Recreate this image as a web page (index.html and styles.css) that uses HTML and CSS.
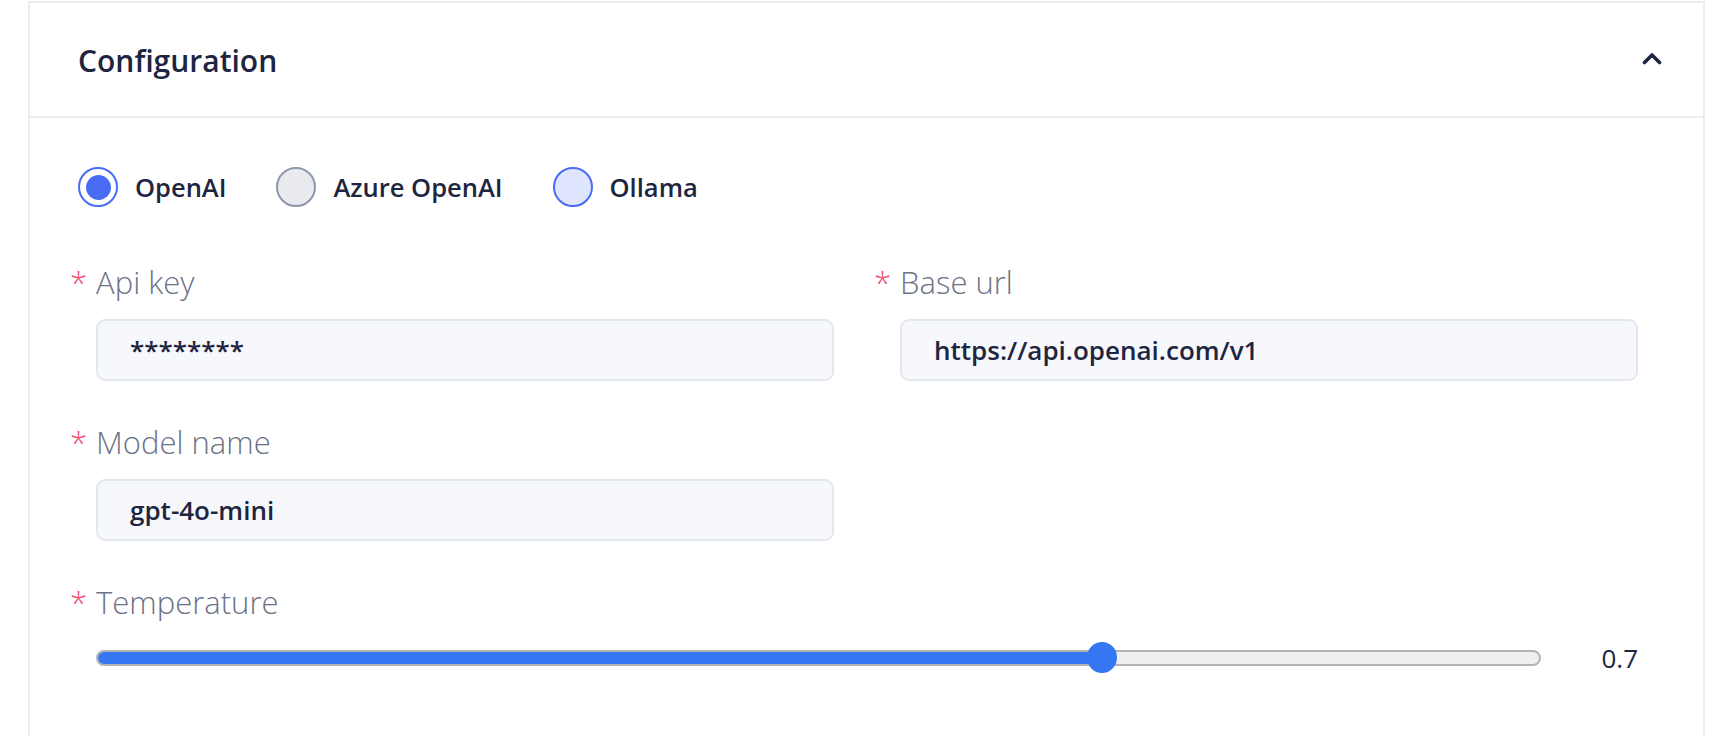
FILE: index.html
```html
<!DOCTYPE html>
<html lang="en">
<head>
<meta charset="utf-8">
<title>Configuration</title>
<link rel="stylesheet" href="styles.css">
</head>
<body>
<section class="card">
  <header class="card-header">
    <h2 class="card-title">Configuration</h2>
    <svg class="chevron" width="20" height="13" viewBox="0 0 20 13" aria-hidden="true">
      <path d="M2.5 10.5 L10 3 L17.5 10.5" fill="none" stroke="#1e2541" stroke-width="3.6" stroke-linecap="round" stroke-linejoin="round"/>
    </svg>
  </header>
  <div class="card-body">
    <div class="radio-row">
      <label class="radio">
        <span class="radio-circle radio-checked"><span class="radio-dot"></span></span>
        <span class="radio-label">OpenAI</span>
      </label>
      <label class="radio">
        <span class="radio-circle radio-gray"></span>
        <span class="radio-label">Azure OpenAI</span>
      </label>
      <label class="radio">
        <span class="radio-circle radio-light"></span>
        <span class="radio-label">Ollama</span>
      </label>
    </div>
    <div class="form-grid">
      <div class="field">
        <div class="field-label"><span class="req">*</span>Api key</div>
        <div class="input">********</div>
      </div>
      <div class="field">
        <div class="field-label"><span class="req">*</span>Base url</div>
        <div class="input">https://api.openai.com/v1</div>
      </div>
      <div class="field">
        <div class="field-label"><span class="req">*</span>Model name</div>
        <div class="input">gpt-4o-mini</div>
      </div>
      <div class="field"></div>
      <div class="field field-wide">
        <div class="field-label"><span class="req">*</span>Temperature</div>
        <div class="slider-row">
          <div class="slider">
            <div class="slider-track">
              <div class="slider-fill" style="width: 1006px"></div>
            </div>
            <div class="slider-thumb" style="left: 991px"></div>
          </div>
          <div class="slider-value">0.7</div>
        </div>
      </div>
    </div>
  </div>
</section>
</body>
</html>
```

FILE: styles.css
```css
* {
  box-sizing: border-box;
}

html, body {
  margin: 0;
  padding: 0;
  background: #ffffff;
}

body {
  font-family: "Open Sans", "Noto Sans", sans-serif;
  color: #1e2541;
  width: 1732px;
  height: 736px;
  overflow: hidden;
}

.card {
  margin: 1px 0 0 28px;
  width: 1677px;
  height: 800px;
  border: 2px solid #e8ecf3;
  border-bottom: none;
}

.card-header {
  height: 115px;
  display: flex;
  align-items: center;
  justify-content: space-between;
  padding: 2px 41px 0 48px;
  border-bottom: 2px solid #e8ecf3;
}

.card-title {
  margin: 0;
  font-size: 30px;
  font-weight: 600;
  color: #1e2541;
}

.chevron {
  display: block;
  margin-top: -4px;
}

.card-body {
  padding: 49px 0 0 0;
}

.radio-row {
  display: flex;
  align-items: center;
  gap: 50px;
  margin-left: 48px;
  height: 40px;
}

.radio {
  display: flex;
  align-items: center;
  gap: 17px;
}

.radio-circle {
  width: 40px;
  height: 40px;
  border-radius: 50%;
  border: 2px solid #4a6cf5;
  display: flex;
  align-items: center;
  justify-content: center;
  background: #ffffff;
}

.radio-dot {
  width: 25px;
  height: 25px;
  border-radius: 50%;
  background: #4a6cf5;
}

.radio-gray {
  background: #e8eaef;
  border-color: #8e97ab;
}

.radio-light {
  background: #dfe5fc;
  border-color: #4a6cf5;
}

.radio-label {
  font-size: 25.5px;
  font-weight: 600;
  color: #1e2541;
}

.form-grid {
  display: grid;
  grid-template-columns: 738px 738px;
  column-gap: 66px;
  row-gap: 41px;
  margin: 55px 0 0 66px;
}

.field-wide {
  grid-column: 1 / span 2;
}

.field-label {
  height: 40px;
  line-height: 40px;
  font-size: 31px;
  font-weight: 300;
  color: #6b7385;
  margin-left: -26px;
  margin-bottom: 17px;
  white-space: nowrap;
}

.req {
  color: #ef4d72;
  margin-right: 9px;
  font-weight: 300;
}

.input {
  height: 62px;
  border: 2px solid #e2e7f0;
  border-radius: 9px;
  background: #f7f8fc;
  padding: 0 32px;
  display: flex;
  align-items: center;
  font-size: 26px;
  font-weight: 600;
  color: #1e2541;
}

.slider-row {
  display: flex;
  align-items: center;
  height: 32px;
  margin-top: 20px;
}

.slider {
  position: relative;
  width: 1445px;
  height: 32px;
  display: flex;
  align-items: center;
}

.slider-track {
  width: 100%;
  height: 16px;
  border-radius: 8px;
  background: #efefef;
  border: 2px solid #b3b3b3;
  overflow: hidden;
  display: flex;
}

.slider-fill {
  margin: -2px 0 0 -2px;
  height: 16px;
  background: #3576f2;
  border-radius: 8px 0 0 8px;
}

.slider-thumb {
  position: absolute;
  top: 0;
  width: 30px;
  height: 31px;
  border-radius: 50%;
  background: #3576f2;
}

.slider-value {
  flex: 1;
  text-align: right;
  font-size: 26px;
  font-weight: 400;
  color: #1e2541;
}
```
